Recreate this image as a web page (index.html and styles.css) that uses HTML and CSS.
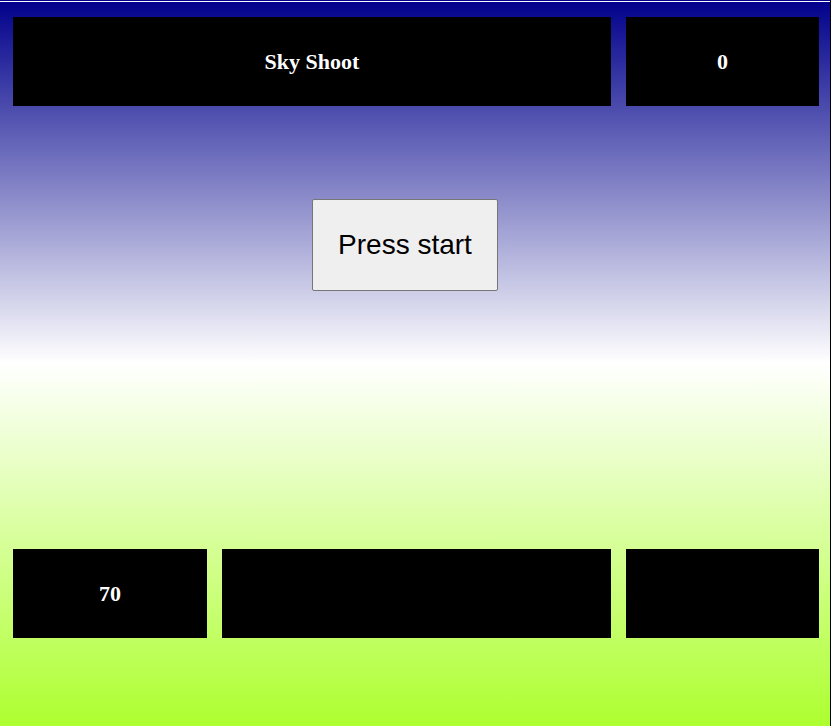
FILE: index.html
```html
<!DOCTYPE html>
<html>
<head>
<meta charset="utf-8">
<title>Sky Shoot</title>
<link rel="stylesheet" href="styles.css">
</head>
<body>
<div class="game">
  <div class="row top">
    <div class="box title">Sky Shoot</div>
    <div class="box score">0</div>
  </div>
  <div class="stage">
    <button class="start">Press start</button>
  </div>
  <div class="row bottom">
    <div class="box">70</div>
    <div class="box"></div>
    <div class="box"></div>
  </div>
</div>
</body>
</html>
```
FILE: styles.css
```css
html {
  height: 100%;
}
body {
  margin: 0;
  height: 726px;
  overflow: hidden;
  background: linear-gradient(to bottom, #00008b 0%, #ffffff 50%, #adff2f 100%);
  font-family: "Liberation Serif", serif;
  position: relative;
}
body::before {
  content: "";
  position: absolute;
  left: 0;
  right: 1px;
  top: 1px;
  height: 1px;
  background: #ffffff;
}
body::after {
  content: "";
  position: absolute;
  top: 0;
  bottom: 0;
  right: 0;
  width: 1px;
  background: #000000;
}
.game {
  padding: 17px 12px 0 13px;
  display: flex;
  flex-direction: column;
}
.row {
  display: grid;
  grid-template-columns: 194px 389px 193px;
  column-gap: 15px;
  height: 89px;
}
.box {
  background: #000;
  color: #fff;
  font-weight: bold;
  font-size: 22px;
  display: flex;
  align-items: center;
  justify-content: center;
}
.title {
  grid-column: 1 / span 2;
}
.stage {
  padding: 93px 0 0 299px;
  height: 350px;
  box-sizing: border-box;
}
.start {
  width: 186px;
  height: 92px;
  font-family: "Liberation Sans", Arial, sans-serif;
  font-size: 28px;
  color: #000;
  background: #efefef;
  border: 1px solid #767676;
  border-radius: 2px;
  padding: 0;
  margin: 0;
}
.bottom {
  margin-top: 93px;
}
```
